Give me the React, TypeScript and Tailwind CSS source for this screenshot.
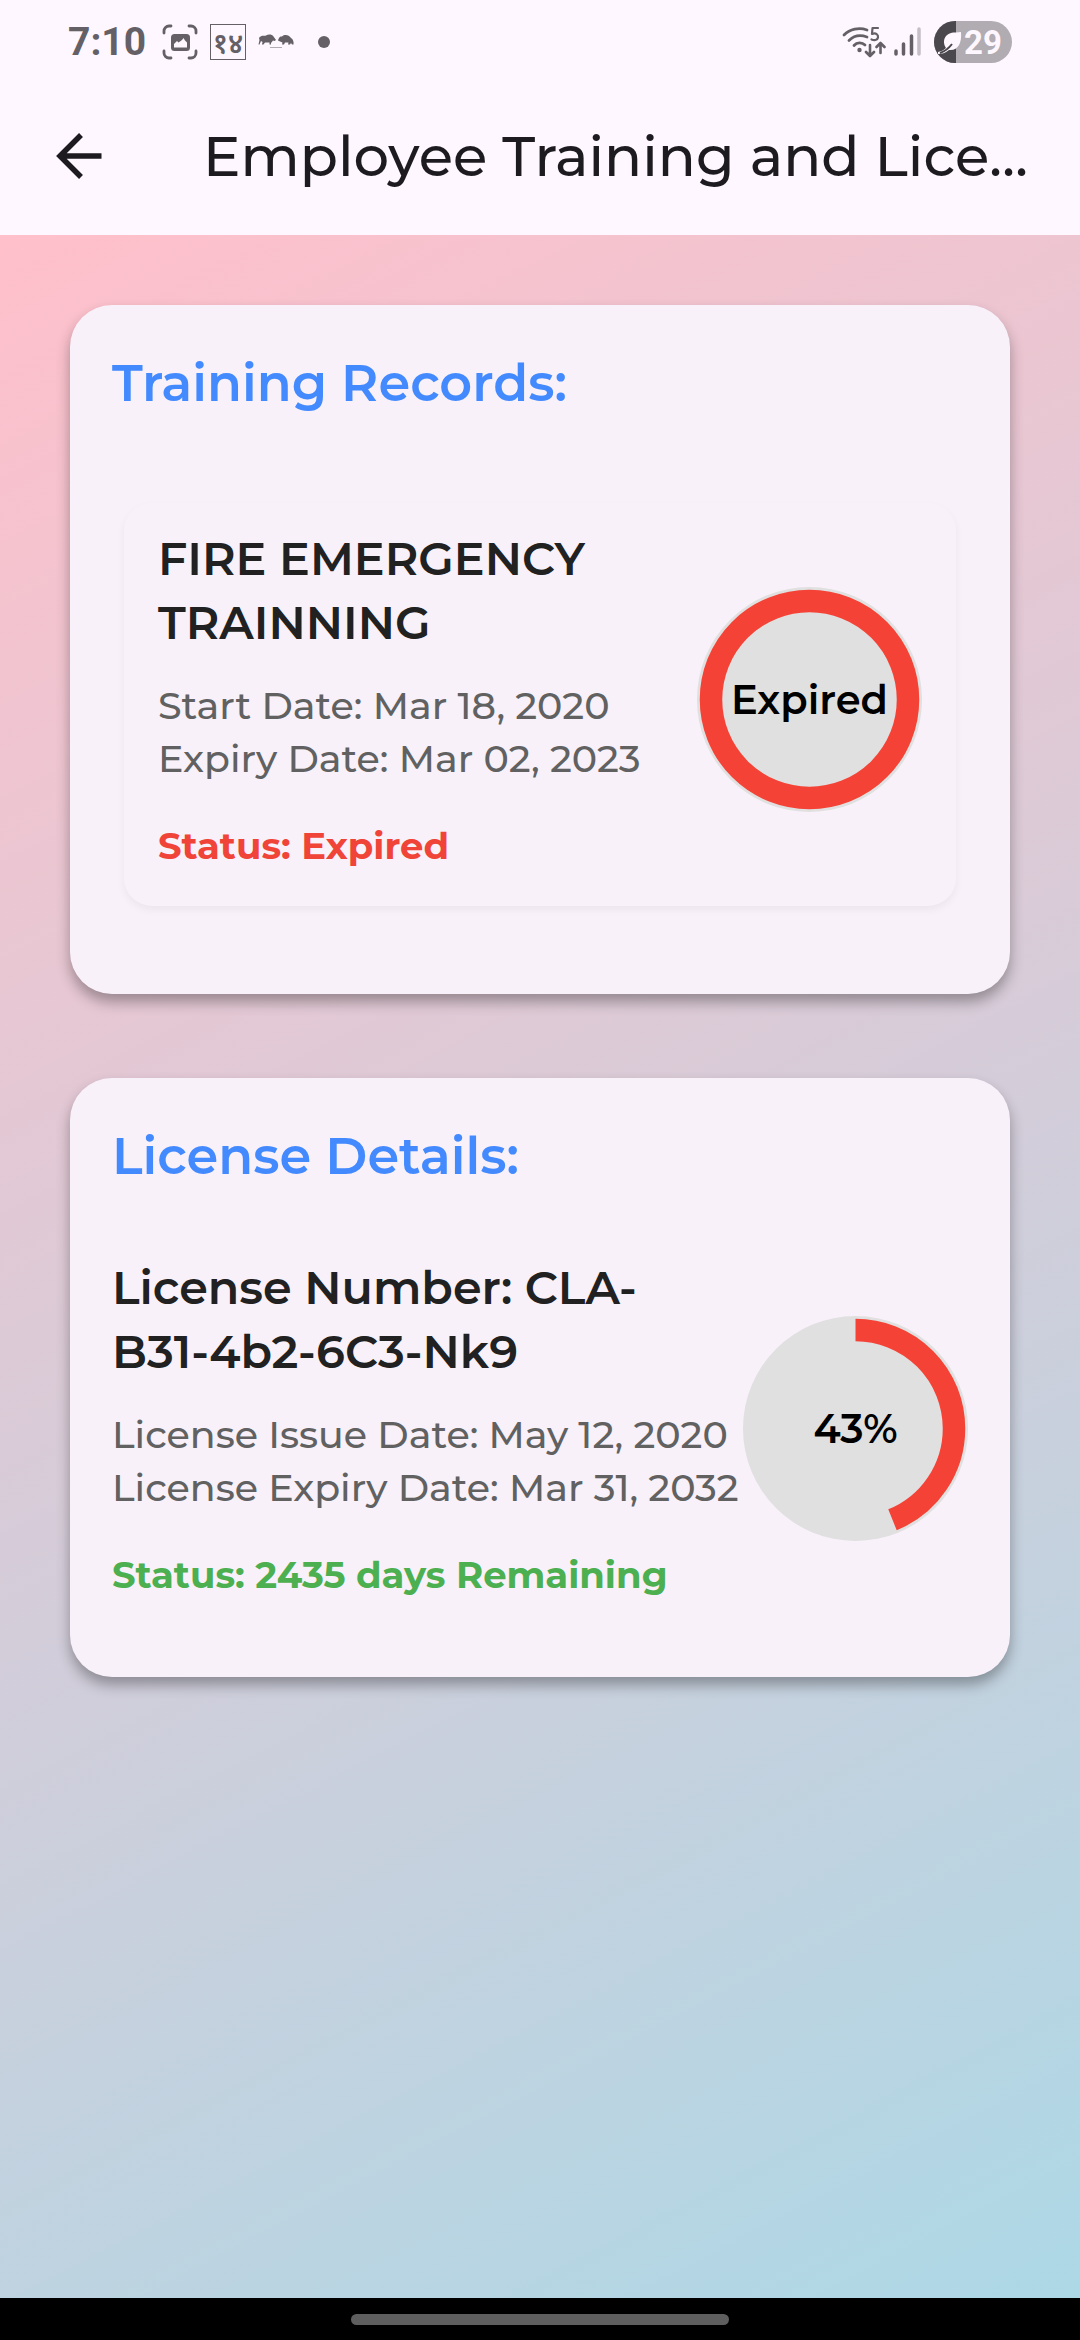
import React from "react";

const leafPath =
  "M4 29 C8 28 10 27 12 25 C7 17 12 9 22 9.500 L27 9 C28 20 24 28 15 27 C11 30 8 31 4 31 Z";

function CaptureIcon() {
  return (
    <svg className="size-9" viewBox="0 0 36 36" fill="none" stroke="#646066" strokeWidth="2.800" strokeLinecap="round">
      <path d="M2 9V7a5 5 0 0 1 5-5h2M27 2h2a5 5 0 0 1 5 5v2M34 27v2a5 5 0 0 1-5 5h-2M9 34H7a5 5 0 0 1-5-5v-2" />
      <rect x="9" y="10" width="19" height="17" rx="3.500" fill="#646066" stroke="none" />
      <path d="M12 23.500v-3.500l3-3 1.500 1.500 1.500-1 2-1.500 1.500-2 1.500 2.500 2 2v5z" fill="#fef7ff" stroke="none" />
    </svg>
  );
}

function BullBearIcon() {
  return (
    <svg className="h-4 w-9" viewBox="0 0 36 16" fill="#646066">
      <path d="M1 4C3 1 6 2 8 1.500C10 0 14 0 15.500 2.500L18 6L16.500 7L15 6.500L13 9L13 10.500H11.500L11.500 8.500H7L5.500 10.500H4L4.500 8L3 7L1.500 10.500H.5L1.500 6Z" />
      <path d="M20 6.500C21 3 22 2.500 24 2.500C27 0 31 1 33 4C35 5 36 8 35.500 10.500H34L33 9L32 10.500H30L30.500 8.500H27L26 10.500H24L24.500 8.500L22 7.500Z" />
      <path d="M12 13h12v1H12z" opacity=".5" />
    </svg>
  );
}

function WifiIcon() {
  return (
    <svg className="h-8 w-11" viewBox="0 0 44 32" fill="none" stroke="#646066" strokeWidth="2.800" strokeLinecap="round" strokeLinejoin="round">
      <path d="M2 9C8 3 17 1 25 4M7 14.500C12 9.500 18 8.500 25 11M12 19.500C15 16 20 16 23 19" />
      <circle cx="17.500" cy="24" r="2.200" fill="#646066" stroke="none" />
      <path d="M36 2H30.500L30 8C34 6.500 36.500 8.500 36 11.500C35.500 14.500 32 14.500 29.500 13.500" strokeWidth="2.200" />
      <path d="M28 19v10.500M24 26l4 4 4-4M38.500 27V17.500M34.500 21l4-4 4 4" strokeWidth="2.600" />
    </svg>
  );
}

function SignalIcon() {
  return (
    <svg className="h-8 w-7" viewBox="0 0 28 32" strokeWidth="3.500" strokeLinecap="round">
      <path d="M2 25v3M9.500 18v10M17.500 10v18" stroke="#646066" />
      <path d="M25 3v25" stroke="#c4bec6" />
    </svg>
  );
}

function Gauge({ share, label }: { share: number; label: string }) {
  const length = 2 * Math.PI * 98.5;
  return (
    <div className="relative size-[225px] shrink-0">
      <svg className="size-full" viewBox="0 0 225 225">
        <circle cx="112.500" cy="112.500" r="112.500" fill="#e0e0e0" />
        <circle
          cx="112.500"
          cy="112.500"
          r="98.500"
          fill="none"
          stroke="#f44336"
          strokeWidth="22.500"
          strokeDasharray={`${share * length} ${length}`}
          transform="rotate(-90 112.500 112.500)"
        />
      </svg>
      <span className="absolute inset-0 flex items-center justify-center text-[40px] font-semibold text-black">{label}</span>
    </div>
  );
}

function Record({
  title,
  dates,
  status,
  tone,
  share,
  label,
}: {
  title: [string, string];
  dates: string[];
  status: string;
  tone: string;
  share: number;
  label: string;
}) {
  return (
    <div className="flex items-center justify-between">
      <div className="min-w-0 whitespace-nowrap">
        <h3 className="text-[46px] leading-[64px] font-semibold text-[#212121]">
          {title[0]}
          <br />
          {title[1]}
        </h3>
        <div className="mt-6 text-[38px] leading-[53px] font-medium text-[#616161]">
          {dates.map((d) => (
            <p key={d}>{d}</p>
          ))}
        </div>
        <p className={`mt-[34px] text-[37px] leading-[53px] font-bold ${tone}`}>{status}</p>
      </div>
      <Gauge share={share} label={label} />
    </div>
  );
}

const cardClass =
  "rounded-[42px] bg-[#f8f1f9] px-[42px] pt-[46px] shadow-[0_8px_14px_rgba(0,0,0,0.32)]";

export default function App() {
  return (
    <div className="flex min-h-screen flex-col bg-[#fef7ff] font-['Montserrat','Inter','Noto_Sans',sans-serif]">
      <header>
        <div className="flex h-[84px] items-center justify-between px-[68px] text-[#646066]">
          <div className="flex items-center">
            <span className="w-[94px] font-['Roboto',sans-serif] text-[39px] font-bold">7:10</span>
            <CaptureIcon />
            <span className="ml-3 flex size-9 items-center justify-center border border-[#646066] font-['Noto_Sans',sans-serif] text-[28px] leading-none font-semibold">
              १४
            </span>
            <span className="ml-3">
              <BullBearIcon />
            </span>
            <span className="ml-6 size-3 rounded-full bg-[#646066]" />
          </div>
          <div className="flex items-center">
            <WifiIcon />
            <span className="ml-2">
              <SignalIcon />
            </span>
            <span className="ml-3 flex h-[42px] w-[78px] items-center overflow-hidden rounded-full bg-[#b1abb2]">
              <span className="flex h-full w-[22px] bg-[#4a484c]">
                <svg className="h-[42px] w-7 shrink-0" viewBox="0 -2 28 42">
                  <path d={leafPath} fill="#fef7ff" />
                  <path d="M6 30C12 28 15 25 18 21" stroke="#4a484c" strokeWidth="2" fill="none" />
                </svg>
              </span>
              <span className="pl-2 font-['Roboto',sans-serif] text-[33px] leading-none font-bold text-[#fef7ff]">29</span>
            </span>
          </div>
        </div>
        <div className="flex h-[151px] items-center pb-2 pl-[56px]">
          <button type="button" aria-label="Back" className="flex w-[147px] shrink-0">
            <svg className="size-12" viewBox="0 0 48 48" fill="none" stroke="#1d1b20" strokeWidth="5.500">
              <path d="M45.500 24H4M25 3L4 24l21 21" />
            </svg>
          </button>
          <h1 className="text-[56px] leading-[72px] font-medium whitespace-nowrap text-[#1d1b20]">Employee Training and Lice…</h1>
        </div>
      </header>

      <main className="flex grow flex-col gap-[84px] bg-[linear-gradient(152.4deg,#ffc0cb,#add8e6)] px-[70px] pt-[70px]">
        <section className={`${cardClass} pb-[88px]`}>
          <h2 className="text-[51px] leading-[64px] font-semibold text-[#448aff]">Training Records:</h2>
          <div className="mx-3 mt-[88px] rounded-[28px] px-[34px] pt-6 pb-[34px] shadow-[0_4px_8px_rgba(0,0,0,0.05)]">
            <Record
              title={["FIRE EMERGENCY", "TRAINNING"]}
              dates={["Start Date: Mar 18, 2020", "Expiry Date: Mar 02, 2023"]}
              status="Status: Expired"
              tone="text-[#f04438]"
              share={1}
              label="Expired"
            />
          </div>
        </section>

        <section className={`${cardClass} pb-[76px]`}>
          <h2 className="mb-[68px] text-[51px] leading-[64px] font-semibold text-[#448aff]">License Details:</h2>
          <Record
            title={["License Number: CLA-", "B31-4b2-6C3-Nk9"]}
            dates={["License Issue Date: May 12, 2020", "License Expiry Date: Mar 31, 2032"]}
            status="Status: 2435 days Remaining"
            tone="text-[#4caf50]"
            share={0.438}
            label="43%"
          />
        </section>
      </main>

      <footer className="flex h-[42px] items-center justify-center bg-black">
        <span className="h-[11px] w-[35%] rounded-full bg-[#5e5e5e]" />
      </footer>
    </div>
  );
}
